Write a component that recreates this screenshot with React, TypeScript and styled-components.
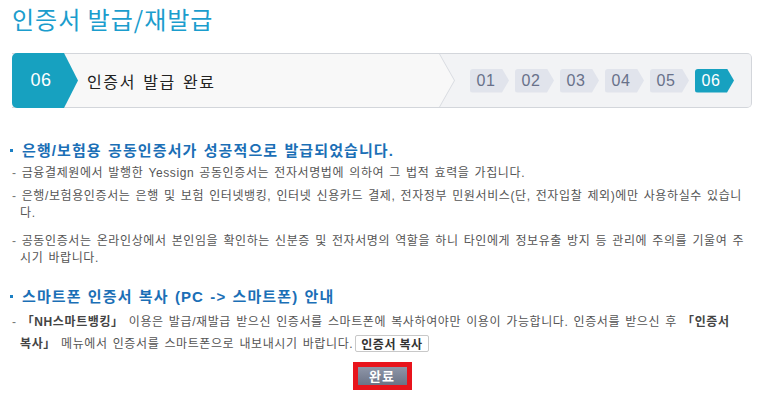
import React from 'react'
import styled, { createGlobalStyle } from 'styled-components'

const GlobalStyle = createGlobalStyle`
  body {
    margin: 0;
    background: #fff;
    font-family: "Liberation Sans", "Noto Sans CJK KR", sans-serif;
  }
`

const Page = styled.div`
  padding: 0 15px 0 12px;
`

const Title = styled.h1`
  margin: 0;
  padding-top: 2px;
  height: 51px;
  font-family: "Noto Sans CJK KR", sans-serif;
  font-size: 24px;
  font-weight: 400;
  line-height: 34px;
  letter-spacing: 1px;
  color: #1b9dcd;
`

const StepBox = styled.div`
  display: flex;
  align-items: center;
  height: 53px;
  border: 1px solid #d3d6db;
  border-left: none;
  border-radius: 0 5px 5px 0;
  background: #f8f8f8;
`

const CurrentStep = styled.div`
  width: 66px;
  height: 55px;
  padding-right: 8px;
  box-sizing: border-box;
  margin: -1px 0;
  display: flex;
  align-items: center;
  justify-content: center;
  border-radius: 5px 0 0 5px;
  background: #17a1c0;
  clip-path: polygon(0 0, 52px 0, 66px 50%, 52px 100%, 0 100%);
  color: #fff;
  font-size: 18px;
  letter-spacing: 0.5px;
`

const StepTitle = styled.div`
  flex: 1;
  margin-left: 9px;
  font-family: "Noto Sans CJK KR", sans-serif;
  font-size: 16px;
  letter-spacing: 1.6px;
  word-spacing: 2px;
  color: #222;
`

const notch = 'polygon(0 0, 100% 0, 100% 100%, 0 100%, 15px 50%)'

const StepRail = styled.div`
  width: 312px;
  height: 100%;
  padding-left: 1px;
  box-sizing: border-box;
  background: #d9dce1;
  clip-path: ${notch};
  border-radius: 0 4px 4px 0;
`

const StepRailInner = styled.div`
  height: 100%;
  display: flex;
  align-items: center;
  gap: 6px;
  padding-left: 30px;
  background: #f2f3f5;
  clip-path: ${notch};
  border-radius: 0 4px 4px 0;
`

const StepChip = styled.div<{ $active?: boolean }>`
  width: 39px;
  height: 24px;
  padding-right: 7px;
  box-sizing: border-box;
  display: flex;
  align-items: center;
  justify-content: center;
  border-radius: 3px 0 0 3px;
  clip-path: polygon(0 0, 32px 0, 39px 50%, 32px 100%, 0 100%);
  background: ${({ $active }) => ($active ? '#17a1c0' : '#e1e4ec')};
  color: ${({ $active }) => ($active ? '#fff' : '#68718a')};
  font-size: 16px;
  letter-spacing: 0.5px;
`

const Section = styled.section<{ $top: number }>`
  margin-top: ${({ $top }) => $top}px;
`

const Heading = styled.h2`
  margin: 0 0 4px -2px;
  font-size: 15px;
  font-weight: 700;
  line-height: 20px;
  color: #1b6fb6;
  letter-spacing: 1.1px;
  word-spacing: 1px;

  &::before {
    content: '';
    display: inline-block;
    width: 3px;
    height: 3px;
    margin: 0 9px 4px 0;
    vertical-align: middle;
    background: #1b7fc4;
  }
`

const List = styled.ul`
  list-style: none;
  margin: 0;
  padding: 0;
`

const Item = styled.li<{ $gap?: number; $line?: number }>`
  margin-top: ${({ $gap = 0 }) => $gap}px;
  padding-left: 8px;
  text-indent: -8px;
  font-size: 12px;
  line-height: ${({ $line = 17 }) => $line}px;
  letter-spacing: 0.6px;
  word-spacing: 1.2px;
  color: #555;
  white-space: nowrap;

  &::before {
    content: '- ';
    color: #777;
  }
`

const Strong = styled.b`
  font-weight: 700;
  color: #444;
`

const InlineButton = styled.button`
  margin-left: 2px;
  padding: 0 5px;
  height: 17px;
  border: 1px solid #c8c8c8;
  border-radius: 2px;
  background: #fff;
  font-family: "Noto Sans CJK KR", sans-serif;
  font-size: 12px;
  font-weight: 700;
  line-height: 15px;
  letter-spacing: 0.6px;
  color: #333;
  text-indent: 0;
  vertical-align: top;
  margin-top: 2px;
`

const Footer = styled.div`
  display: flex;
  justify-content: center;
  margin-top: 7px;
`

const DoneFrame = styled.div`
  padding: 5px;
  background: #e8141c;
`

const DoneButton = styled.button`
  width: 49px;
  height: 18px;
  padding: 0;
  border: none;
  background: linear-gradient(#8e96a8, #6b7386);
  font-family: "Noto Sans CJK KR", sans-serif;
  font-size: 13px;
  font-weight: 700;
  line-height: 18px;
  letter-spacing: 1px;
  color: #fff;
`

const steps = ['01', '02', '03', '04', '05', '06']

export default function App() {
  return (
    <Page>
      <GlobalStyle />
      <Title>인증서 발급/재발급</Title>
      <StepBox>
        <CurrentStep>06</CurrentStep>
        <StepTitle>인증서 발급 완료</StepTitle>
        <StepRail>
          <StepRailInner>
            {steps.map((s) => (
              <StepChip key={s} $active={s === '06'}>{s}</StepChip>
            ))}
          </StepRailInner>
        </StepRail>
      </StepBox>

      <Section $top={33}>
        <Heading>은행/보험용 공동인증서가 성공적으로 발급되었습니다.</Heading>
        <List>
          <Item>금융결제원에서 발행한 Yessign 공동인증서는 전자서명법에 의하여 그 법적 효력을 가집니다.</Item>
          <Item $gap={6}>
            은행/보험용인증서는 은행 및 보험 인터넷뱅킹, 인터넷 신용카드 결제, 전자정부 민원서비스(단, 전자입찰 제외)에만 사용하실수 있습니
            <br />다.
          </Item>
          <Item $gap={11}>
            공동인증서는 온라인상에서 본인임을 확인하는 신분증 및 전자서명의 역할을 하니 타인에게 정보유출 방지 등 관리에 주의를 기울여 주
            <br />시기 바랍니다.
          </Item>
        </List>
      </Section>

      <Section $top={20}>
        <Heading>스마트폰 인증서 복사 (PC -&gt; 스마트폰) 안내</Heading>
        <List>
          <Item $line={22}>
            <Strong>「NH스마트뱅킹」</Strong> 이용은 발급/재발급 받으신 인증서를 스마트폰에 복사하여야만 이용이 가능합니다. 인증서를 받으신 후 <Strong>「인증서
            <br />복사」</Strong> 메뉴에서 인증서를 스마트폰으로 내보내시기 바랍니다.
            <InlineButton type="button">인증서 복사</InlineButton>
          </Item>
        </List>
      </Section>

      <Footer>
        <DoneFrame>
          <DoneButton type="button">완료</DoneButton>
        </DoneFrame>
      </Footer>
    </Page>
  )
}
